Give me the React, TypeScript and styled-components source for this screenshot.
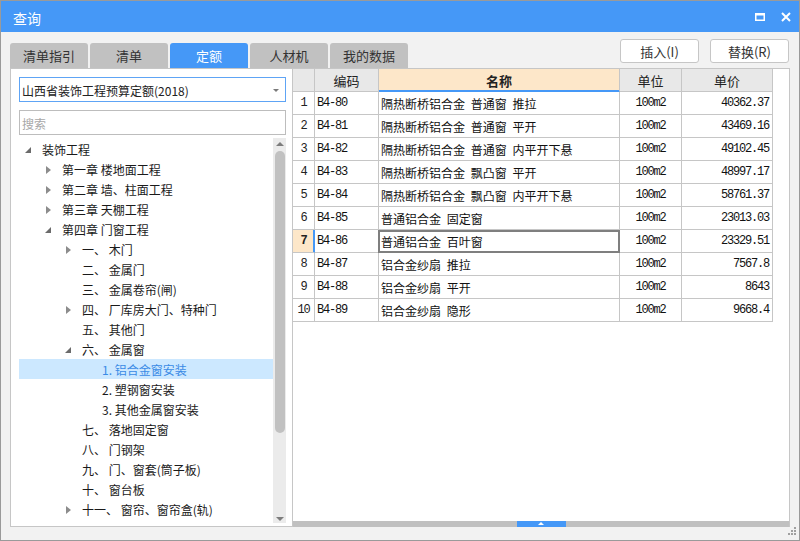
import React from "react";
import styled, { createGlobalStyle } from "styled-components";

const BLUE = "#4598f7";
const LINE = "#c6c6c6";
const CJK = `"Noto Sans CJK SC", "Noto Sans", sans-serif`;
const MONO = `"Liberation Mono", "DejaVu Sans Mono", monospace`;

const GlobalStyle = createGlobalStyle`
  html, body { margin: 0; padding: 0; background: #ffffff; }
  body { font-family: ${CJK}; }
  * { box-sizing: border-box; }
`;

const Window = styled.div`
  position: relative;
  width: 800px;
  height: 541px;
  border: 1px solid #9a9a9a;
  background: #f2f2f2;
  display: flex;
  flex-direction: column;
  font-family: ${CJK};
  overflow: hidden;
`;

const TitleBar = styled.div`
  flex: none;
  height: 31px;
  background: ${BLUE};
  display: flex;
  align-items: center;
  padding: 0 3px 0 12px;
  color: #fff;
`;

const Title = styled.div`
  flex: 1;
  font-size: 14px;
  line-height: 1;
  padding-top: 2px;
`;

const WinButton = styled.div`
  width: 20px;
  height: 20px;
  display: flex;
  align-items: center;
  justify-content: center;
  margin-left: 6px;
`;

const Toolbar = styled.div`
  flex: none;
  height: 36px;
  display: flex;
  justify-content: space-between;
  padding: 0 10px 0 9px;
`;

const Tabs = styled.div`
  display: flex;
  gap: 2px;
  align-self: flex-end;
`;

const Tab = styled.div<{ $active?: boolean }>`
  width: 78px;
  height: 25px;
  border-radius: 3px 3px 0 0;
  background: ${(p) => (p.$active ? BLUE : "#c1c1c1")};
  color: ${(p) => (p.$active ? "#fff" : "#333")};
  font-size: 13px;
  display: flex;
  align-items: center;
  justify-content: center;
`;

const Actions = styled.div`
  display: flex;
  gap: 11px;
  padding-top: 7px;
`;

const ActionButton = styled.button`
  width: 79px;
  height: 24px;
  padding: 0;
  background: #fff;
  border: 1px solid #c6c6c6;
  border-radius: 3px;
  font: 13px ${CJK};
  color: #333;
`;

const Main = styled.div`
  flex: 1;
  min-height: 0;
  display: flex;
  padding: 0 9px 13px;
`;

const LeftPanel = styled.div`
  width: 282px;
  flex: none;
  background: #fff;
  border: 1px solid ${LINE};
  border-right: none;
  padding: 8px 6px 3px 8px;
  display: flex;
  flex-direction: column;
`;

const Select = styled.div`
  position: relative;
  height: 25px;
  flex: none;
  border: 1px solid #5ea4f5;
  font-size: 12px;
  color: #222;
  display: flex;
  align-items: center;
  padding: 1px 0 0 2px;
`;

const SelectArrow = styled.span`
  position: absolute;
  right: 6px;
  top: 11px;
  border-left: 3px solid transparent;
  border-right: 3px solid transparent;
  border-top: 3px solid #7a7a7a;
`;

const Search = styled.div`
  height: 25px;
  flex: none;
  margin-top: 8px;
  border: 1px solid #bdbdbd;
  font-size: 12px;
  color: #a8a8a8;
  display: flex;
  align-items: center;
  padding: 1px 0 0 2px;
`;

const TreeArea = styled.div`
  flex: 1;
  min-height: 0;
  margin-top: 3px;
  display: flex;
`;

const TreeList = styled.div`
  flex: 1;
  overflow: hidden;
  padding-top: 1px;
`;

const TreeRow = styled.div<{ $level: number; $selected?: boolean }>`
  height: 20px;
  display: flex;
  align-items: center;
  padding-left: ${(p) => 1 + p.$level * 20}px;
  background: ${(p) => (p.$selected ? "#cce8ff" : "transparent")};
  color: ${(p) => (p.$selected ? "#3a8be6" : "#1a1a1a")};
  font-size: 12px;
  white-space: nowrap;
`;

const Toggle = styled.span`
  width: 16px;
  height: 20px;
  margin-right: 6px;
  flex: none;
  display: flex;
  align-items: center;
  justify-content: center;
  padding-top: 1px;
`;

const VScroll = styled.div`
  width: 13px;
  flex: none;
  background: #ebebeb;
  display: flex;
  flex-direction: column;
  align-items: center;
`;

const ScrollArrow = styled.span<{ $down?: boolean }>`
  flex: none;
  margin: ${(p) => (p.$down ? "auto 0 2px" : "4px 0 0")};
  border-left: 4px solid transparent;
  border-right: 4px solid transparent;
  ${(p) =>
    p.$down ? "border-top: 4px solid #7d7d7d;" : "border-bottom: 4px solid #7d7d7d;"}
`;

const ScrollThumb = styled.div`
  width: 10px;
  height: 282px;
  margin-top: 5px;
  border-radius: 5px;
  background: #c1c1c1;
`;

const Grid = styled.div`
  flex: 1;
  background: #fff;
  border: 1px solid ${LINE};
  border-bottom: none;
  display: flex;
  flex-direction: column;
`;

const TableArea = styled.div`
  flex: 1;
`;

const Table = styled.div`
  display: grid;
  grid-template-columns: 22px 64px 241px 62px 91px;
  width: 480px;
`;

const Cell = styled.div`
  position: relative;
  height: 23px;
  border-right: 1px solid ${LINE};
  border-bottom: 1px solid ${LINE};
  display: flex;
  align-items: center;
  white-space: nowrap;
  overflow: visible;
`;

const HeadCell = styled(Cell)<{ $accent?: boolean }>`
  justify-content: center;
  font-size: 13px;
  color: #222;
  background: ${(p) => (p.$accent ? "#fde7c9" : "#e8e8e8")};
  font-weight: ${(p) => (p.$accent ? 700 : 400)};
  ${(p) => (p.$accent ? `border-bottom-color: ${BLUE}; box-shadow: inset 0 -1px 0 ${BLUE};` : "")}
`;

const NumCell = styled(Cell)<{ $current?: boolean }>`
  justify-content: center;
  font: ${(p) => (p.$current ? 700 : 400)} 12px ${MONO};
  letter-spacing: -1.2px;
  color: #222;
  background: ${(p) => (p.$current ? "#fde7c9" : "#fff")};
  ${(p) => (p.$current ? `border-right-color: ${BLUE}; box-shadow: inset -1px 0 0 ${BLUE};` : "")}
`;

const CodeCell = styled(Cell)`
  padding-left: 2px;
  font: 12px ${MONO};
  letter-spacing: -1.2px;
  color: #111;
`;

const NameCell = styled(Cell)<{ $focus?: boolean }>`
  padding-left: 2px;
  font-size: 12px;
  word-spacing: 3px;
  color: #111;
  ${(p) =>
    p.$focus
      ? `&::after { content: ""; position: absolute; left: -1px; top: 0; right: -1px; bottom: -1px; border: 2px solid #7f7f7f; }`
      : ""}
`;

const UnitCell = styled(Cell)`
  justify-content: center;
  font: 12px ${MONO};
  letter-spacing: -1.2px;
  color: #111;
`;

const PriceCell = styled(Cell)`
  justify-content: flex-end;
  padding-right: 3px;
  font: 12px ${MONO};
  letter-spacing: -1.2px;
  color: #111;
`;

const HBar = styled.div`
  flex: none;
  height: 6px;
  background: #c0c0c0;
  display: flex;
  justify-content: center;
`;

const HHandle = styled.div`
  width: 49px;
  background: ${BLUE};
  display: flex;
  justify-content: center;
  padding-top: 1px;
  &::after {
    content: "";
    border-left: 3px solid transparent;
    border-right: 3px solid transparent;
    border-bottom: 3px solid #fff;
    height: 0;
  }
`;

const Grip = styled.svg`
  position: absolute;
  right: 3px;
  bottom: 5px;
`;

type Node = { level: number; text: string; state?: "open" | "closed"; selected?: boolean };

const tree: Node[] = [
  { level: 0, text: "装饰工程", state: "open" },
  { level: 1, text: "第一章 楼地面工程", state: "closed" },
  { level: 1, text: "第二章 墙、柱面工程", state: "closed" },
  { level: 1, text: "第三章 天棚工程", state: "closed" },
  { level: 1, text: "第四章 门窗工程", state: "open" },
  { level: 2, text: "一、 木门", state: "closed" },
  { level: 2, text: "二、 金属门" },
  { level: 2, text: "三、 金属卷帘(闸)" },
  { level: 2, text: "四、 厂库房大门、特种门", state: "closed" },
  { level: 2, text: "五、 其他门" },
  { level: 2, text: "六、 金属窗", state: "open" },
  { level: 3, text: "1. 铝合金窗安装", selected: true },
  { level: 3, text: "2. 塑钢窗安装" },
  { level: 3, text: "3. 其他金属窗安装" },
  { level: 2, text: "七、 落地固定窗" },
  { level: 2, text: "八、 门钢架" },
  { level: 2, text: "九、 门、窗套(筒子板)" },
  { level: 2, text: "十、 窗台板" },
  { level: 2, text: "十一、 窗帘、窗帘盒(轨)", state: "closed" },
  { level: 2, text: "十二、 门五金" },
];

const rows = [
  ["B4-80", "隔热断桥铝合金 普通窗 推拉", "100m2", "40362.37"],
  ["B4-81", "隔热断桥铝合金 普通窗 平开", "100m2", "43469.16"],
  ["B4-82", "隔热断桥铝合金 普通窗 内平开下悬", "100m2", "49102.45"],
  ["B4-83", "隔热断桥铝合金 飘凸窗 平开", "100m2", "48997.17"],
  ["B4-84", "隔热断桥铝合金 飘凸窗 内平开下悬", "100m2", "58761.37"],
  ["B4-85", "普通铝合金 固定窗", "100m2", "23013.03"],
  ["B4-86", "普通铝合金 百叶窗", "100m2", "23329.51"],
  ["B4-87", "铝合金纱扇 推拉", "100m2", "7567.8"],
  ["B4-88", "铝合金纱扇 平开", "100m2", "8643"],
  ["B4-89", "铝合金纱扇 隐形", "100m2", "9668.4"],
];

const CURRENT = 6;

const ToggleIcon = ({ state }: { state?: "open" | "closed" }) => {
  if (state === "open")
    return (
      <svg width="6" height="6" viewBox="0 0 6 6">
        <polygon points="6,0 6,6 0,6" fill="#6b6b6b" />
      </svg>
    );
  if (state === "closed")
    return (
      <svg width="5" height="8" viewBox="0 0 5 8">
        <polygon points="0,0 5,4 0,8" fill="#8c8c8c" />
      </svg>
    );
  return null;
};

const tabs = ["清单指引", "清单", "定额", "人材机", "我的数据"];

export default function App() {
  return (
    <>
      <GlobalStyle />
      <Window>
        <TitleBar>
          <Title>查询</Title>
          <WinButton>
            <svg width="10" height="8" viewBox="0 0 10 8">
              <path d="M0 0H10V8H0Z M1.5 2.5H8.5V6.5H1.5Z" fill="#fff" fillRule="evenodd" />
            </svg>
          </WinButton>
          <WinButton>
            <svg width="10" height="10" viewBox="0 0 10 10">
              <path d="M1 1L9 9M9 1L1 9" stroke="#fff" strokeWidth="2" />
            </svg>
          </WinButton>
        </TitleBar>

        <Toolbar>
          <Tabs>
            {tabs.map((t) => (
              <Tab key={t} $active={t === "定额"}>
                {t}
              </Tab>
            ))}
          </Tabs>
          <Actions>
            <ActionButton>插入(I)</ActionButton>
            <ActionButton>替换(R)</ActionButton>
          </Actions>
        </Toolbar>

        <Main>
          <LeftPanel>
            <Select>
              山西省装饰工程预算定额(2018)
              <SelectArrow />
            </Select>
            <Search>搜索</Search>
            <TreeArea>
              <TreeList>
                {tree.map((n, i) => (
                  <TreeRow key={i} $level={n.level} $selected={n.selected}>
                    <Toggle>
                      <ToggleIcon state={n.state} />
                    </Toggle>
                    {n.text}
                  </TreeRow>
                ))}
              </TreeList>
              <VScroll>
                <ScrollArrow />
                <ScrollThumb />
                <ScrollArrow $down />
              </VScroll>
            </TreeArea>
          </LeftPanel>

          <Grid>
            <TableArea>
              <Table>
                <HeadCell />
                <HeadCell>编码</HeadCell>
                <HeadCell $accent>名称</HeadCell>
                <HeadCell>单位</HeadCell>
                <HeadCell>单价</HeadCell>
                {rows.map((r, i) => (
                  <React.Fragment key={r[0]}>
                    <NumCell $current={i === CURRENT}>{i + 1}</NumCell>
                    <CodeCell>{r[0]}</CodeCell>
                    <NameCell $focus={i === CURRENT}>{r[1]}</NameCell>
                    <UnitCell>{r[2]}</UnitCell>
                    <PriceCell>{r[3]}</PriceCell>
                  </React.Fragment>
                ))}
              </Table>
            </TableArea>
            <HBar>
              <HHandle />
            </HBar>
          </Grid>
        </Main>

        <Grip width="8" height="8" viewBox="0 0 8 8">
          <rect x="6" y="0" width="2" height="2" fill="#a0a0a0" />
          <rect x="3" y="3" width="2" height="2" fill="#a0a0a0" />
          <rect x="6" y="3" width="2" height="2" fill="#a0a0a0" />
          <rect x="0" y="6" width="2" height="2" fill="#a0a0a0" />
          <rect x="3" y="6" width="2" height="2" fill="#a0a0a0" />
          <rect x="6" y="6" width="2" height="2" fill="#a0a0a0" />
        </Grip>
      </Window>
    </>
  );
}
